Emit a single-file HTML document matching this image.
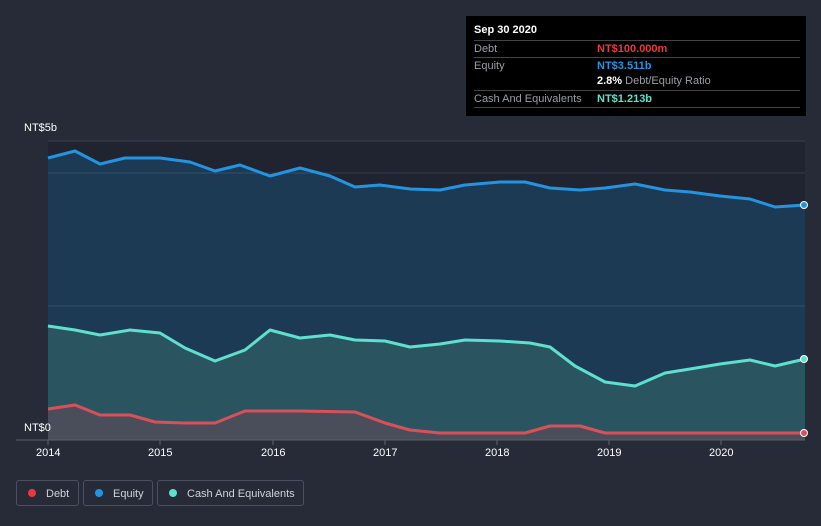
<!DOCTYPE html><html><head><style>
body{margin:0;width:821px;height:526px;background:#262b37;font-family:"Liberation Sans",sans-serif;overflow:hidden;position:relative}
.tt{position:absolute;left:466px;top:16px;width:340px;height:100px;background:#000;color:#fff;font-size:11px}
.row{position:absolute;left:8px;width:326px;border-top:1px solid #444;height:16px;line-height:16px}
.l{color:#9a9ea6;position:absolute;left:0}.v{position:absolute;left:123px;font-weight:bold}
.ax{position:absolute;color:#fff;font-size:11px}
.leg{position:absolute;top:480px;height:26px;border:1px solid #4a5060;border-radius:3px;color:#d0d3d8;font-size:11px;line-height:26px;box-sizing:border-box}
.dot{display:inline-block;width:8px;height:8px;border-radius:50%;margin:0 10px 0 11px;vertical-align:-0px}
</style></head><body>
<svg width="821" height="526" style="position:absolute;left:0;top:0">
<rect x="48" y="141" width="757" height="299" fill="#1f2430"/>
<line x1="48" y1="141" x2="805" y2="141" stroke="#3a404d"/>
<path d="M48,158 L75,151 L100,164 L125,158 L160,158 L190,162 L215,171 L240,165 L270,176 L300,168 L330,176 L355,187 L380,185 L410,189 L440,190 L465,185 L500,182 L525,182 L550,188 L580,190 L605,188 L635,184 L665,190 L690,192 L720,196 L750,199 L775,207 L805,205 L805,440 L48,440Z" fill="#1d3a55"/>
<path d="M48,326 L75,330 L100,335 L130,330 L160,333 L185,348 L215,361 L245,350 L270,330 L300,338 L330,335 L355,340 L385,341 L410,347 L440,344 L465,340 L500,341 L530,343 L550,347 L575,366 L605,382 L635,386 L665,373 L690,369 L720,364 L750,360 L775,366 L805,359 L805,440 L48,440Z" fill="#2a5560"/>
<path d="M48,409 L75,405 L100,415 L130,415 L155,422 L185,423 L215,423 L245,411 L300,411 L355,412 L385,423 L410,430 L440,433 L525,433 L550,426 L580,426 L605,433 L805,433 L805,440 L48,440Z" fill="#4a4e5a"/>
<line x1="48" y1="173" x2="805" y2="173" stroke="rgba(255,255,255,0.1)"/>
<line x1="48" y1="306" x2="805" y2="306" stroke="rgba(255,255,255,0.1)"/>
<path d="M48,158 L75,151 L100,164 L125,158 L160,158 L190,162 L215,171 L240,165 L270,176 L300,168 L330,176 L355,187 L380,185 L410,189 L440,190 L465,185 L500,182 L525,182 L550,188 L580,190 L605,188 L635,184 L665,190 L690,192 L720,196 L750,199 L775,207 L805,205" fill="none" stroke="#2394e0" stroke-width="3" stroke-linejoin="round"/>
<path d="M48,326 L75,330 L100,335 L130,330 L160,333 L185,348 L215,361 L245,350 L270,330 L300,338 L330,335 L355,340 L385,341 L410,347 L440,344 L465,340 L500,341 L530,343 L550,347 L575,366 L605,382 L635,386 L665,373 L690,369 L720,364 L750,360 L775,366 L805,359" fill="none" stroke="#5ee0cc" stroke-width="3" stroke-linejoin="round"/>
<path d="M48,409 L75,405 L100,415 L130,415 L155,422 L185,423 L215,423 L245,411 L300,411 L355,412 L385,423 L410,430 L440,433 L525,433 L550,426 L580,426 L605,433 L805,433" fill="none" stroke="#d9505a" stroke-width="3" stroke-linejoin="round"/>
<line x1="16" y1="440" x2="805" y2="440" stroke="#5a606c"/>
<g stroke="#5a606c"><line x1="48" y1="440" x2="48" y2="445"/><line x1="160" y1="440" x2="160" y2="445"/><line x1="273" y1="440" x2="273" y2="445"/><line x1="385" y1="440" x2="385" y2="445"/><line x1="497" y1="440" x2="497" y2="445"/><line x1="609" y1="440" x2="609" y2="445"/><line x1="721" y1="440" x2="721" y2="445"/></g>
<circle cx="804" cy="205" r="3.5" fill="#2394e0" stroke="#fff"/>
<circle cx="804" cy="359" r="3.5" fill="#5ee0cc" stroke="#fff"/>
<circle cx="804" cy="433" r="3.5" fill="#d9505a" stroke="#fff"/>
</svg>
<div class="ax" style="left:24px;top:122px">NT$5b</div>
<div class="ax" style="left:24px;top:422px">NT$0</div>
<div class="ax" style="left:36px;top:447px">2014</div>
<div class="ax" style="left:148px;top:447px">2015</div>
<div class="ax" style="left:261px;top:447px">2016</div>
<div class="ax" style="left:373px;top:447px">2017</div>
<div class="ax" style="left:485px;top:447px">2018</div>
<div class="ax" style="left:597px;top:447px">2019</div>
<div class="ax" style="left:709px;top:447px">2020</div>
<div class="tt">
<div style="position:absolute;left:8px;top:8px;font-weight:bold">Sep 30 2020</div>
<div class="row" style="top:24px"><span class="l">Debt</span><span class="v" style="color:#e8393f">NT$100.000m</span></div>
<div class="row" style="top:41px"><span class="l">Equity</span><span class="v" style="color:#2394e0">NT$3.511b</span></div>
<div class="row" style="top:57px;border-top:none"><span class="v">2.8% <span style="color:#9a9ea6;font-weight:normal">Debt/Equity Ratio</span></span></div>
<div class="row" style="top:74px;border-bottom:1px solid #444"><span class="l">Cash And Equivalents</span><span class="v" style="color:#5ee0cc">NT$1.213b</span></div>
</div>
<div class="leg" style="left:16px;width:63px"><span class="dot" style="background:#e8393f"></span>Debt</div>
<div class="leg" style="left:83px;width:70px"><span class="dot" style="background:#2394e0"></span>Equity</div>
<div class="leg" style="left:157px;width:147px"><span class="dot" style="background:#5ee0cc"></span>Cash And Equivalents</div>
</body></html>
